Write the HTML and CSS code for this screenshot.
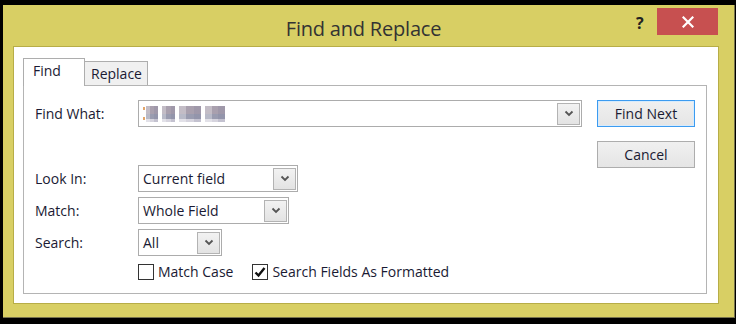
FILE: index.html
```html
<!DOCTYPE html>
<html lang="en">
<head>
<meta charset="utf-8">
<title>Find and Replace</title>
<link rel="stylesheet" href="styles.css">
</head>
<body>
<div class="window">
  <div class="titlebar">
    <div class="title">Find and Replace</div>
    <div class="help">?</div>
    <div class="close">
      <svg width="12" height="12" viewBox="0 0 12 12"><path d="M1.5 1.5 L10.5 10.5 M10.5 1.5 L1.5 10.5" stroke="#fff" stroke-width="2.2" stroke-linecap="square"/></svg>
    </div>
  </div>
  <div class="client">
    <div class="tabs">
      <div class="tab tab-active">Find</div>
      <div class="tab tab-inactive">Replace</div>
    </div>
    <div class="pane">
      <div class="fields">
        <div class="row">
          <div class="label">Find What:</div>
          <div class="combo combo-find">
            <div class="mosaic" aria-hidden="true">
              <span class="caret"></span>
              <span class="blk b1"></span>
              <span class="blk b2"></span>
              <span class="blk b3"></span>
              <span class="blk b4"></span>
            </div>
            <div class="drop"><svg width="10" height="7" viewBox="0 0 10 7"><path d="M1.5 1.5 L5 5 L8.5 1.5" fill="none" stroke="#555" stroke-width="1.8"/></svg></div>
          </div>
        </div>
        <div class="row row-lookin">
          <div class="label">Look In:</div>
          <div class="combo combo-lookin">
            <div class="value">Current field</div>
            <div class="drop"><svg width="10" height="7" viewBox="0 0 10 7"><path d="M1.5 1.5 L5 5 L8.5 1.5" fill="none" stroke="#555" stroke-width="1.8"/></svg></div>
          </div>
        </div>
        <div class="row row-tight">
          <div class="label">Match:</div>
          <div class="combo combo-match">
            <div class="value">Whole Field</div>
            <div class="drop"><svg width="10" height="7" viewBox="0 0 10 7"><path d="M1.5 1.5 L5 5 L8.5 1.5" fill="none" stroke="#555" stroke-width="1.8"/></svg></div>
          </div>
        </div>
        <div class="row row-tight">
          <div class="label">Search:</div>
          <div class="combo combo-search">
            <div class="value">All</div>
            <div class="drop"><svg width="10" height="7" viewBox="0 0 10 7"><path d="M1.5 1.5 L5 5 L8.5 1.5" fill="none" stroke="#555" stroke-width="1.8"/></svg></div>
          </div>
        </div>
        <div class="checks">
          <label class="check"><span class="box"></span><span>Match Case</span></label>
          <label class="check"><span class="box"><svg width="14" height="14" viewBox="0 0 14 14"><path d="M2.5 7.5 L5.5 10.5 L11.5 3" fill="none" stroke="#111" stroke-width="2.4"/></svg></span><span>Search Fields As Formatted</span></label>
        </div>
      </div>
      <div class="actions">
        <div class="btn btn-default">Find Next</div>
        <div class="btn btn-cancel">Cancel</div>
      </div>
    </div>
  </div>
</div>
</body>
</html>
```
FILE: styles.css
```css
html, body {
  margin: 0;
  padding: 0;
  background: #000;
}
body {
  width: 736px;
  height: 324px;
  overflow: hidden;
  font-family: "Open Sans", "Noto Sans", sans-serif;
  font-size: 14px;
  color: #1a1a33;
}
.window {
  margin: 5px 1px 0 3px;
  width: 731px;
  height: 312px;
  background: #d8cf64;
  border-right: 1px solid #77734e;
  border-bottom: 1px solid #77734e;
  display: flex;
  flex-direction: column;
}
.titlebar {
  height: 41px;
  display: flex;
  align-items: flex-start;
  position: relative;
}
.title {
  position: absolute;
  left: 0;
  right: 10px;
  top: 10px;
  text-align: center;
  font-size: 20px;
  color: #333;
  letter-spacing: -0.2px;
}
.help {
  position: absolute;
  left: 633px;
  top: 7px;
  font-weight: bold;
  font-size: 16px;
  color: #222;
}
.close {
  position: absolute;
  left: 654px;
  top: 3px;
  width: 61px;
  height: 27px;
  background: #c75050;
  display: flex;
  align-items: center;
  justify-content: center;
}
.client {
  margin: 0 15px 0 10px;
  height: 245px;
  background: #fff;
  border: 1px solid #b7ad47;
  padding: 11px 10px 0 9px;
  box-sizing: content-box;
  display: flex;
  flex-direction: column;
}
.tabs {
  display: flex;
  align-items: flex-end;
  height: 28px;
  position: relative;
  z-index: 1;
}
.tab {
  box-sizing: border-box;
  border: 1px solid #adadad;
  border-bottom: none;
  padding-left: 9px;
  line-height: 24px;
}
.tab-active {
  width: 62px;
  height: 28px;
  background: #fff;
}
.tab-inactive {
  width: 63px;
  height: 24px;
  margin-bottom: 1px;
  border-left: none;
  background: #f0f0f0;
  padding-left: 6px;
  line-height: 23px;
}
.pane {
  margin-top: -1px;
  width: 684px;
  height: 209px;
  box-sizing: border-box;
  border: 1px solid #b4b4b4;
  padding: 14px 11px 0 11px;
  display: flex;
}
.fields {
  width: 547px;
  display: flex;
  flex-direction: column;
}
.row {
  display: flex;
  align-items: center;
  height: 27px;
}
.row-lookin {
  margin-top: 38px;
}
.row-tight {
  margin-top: 5px;
}
.label {
  width: 103px;
}
.combo {
  box-sizing: border-box;
  height: 27px;
  border: 1px solid #acacac;
  display: flex;
  align-items: center;
  background: #fff;
}
.combo-find { width: 444px; }
.combo-lookin { width: 160px; }
.combo-match { width: 151px; }
.combo-search { width: 84px; }
.value {
  flex: 1;
  padding-left: 4px;
  white-space: nowrap;
}
.mosaic {
  flex: 1;
  display: flex;
  align-items: center;
  padding-left: 4px;
  height: 16px;
}
.caret {
  width: 2px;
  height: 14px;
  background: linear-gradient(#e2a56a 0 20%, transparent 20% 70%, #e2a56a 70% 90%, transparent 90%);
  margin-right: 1px;
}
.blk {
  height: 16px;
  margin-right: 4px;
  background:
    linear-gradient(90deg, rgba(255,255,255,0.3) 0 33%, transparent 33% 66%, rgba(120,120,150,0.2) 66%),
    linear-gradient(#a9a0ae 0 50%, #9a9cb0 50% 80%, #d6d4de 80%);
}
.b1 { width: 12px; }
.b2 { width: 13px; }
.b3 { width: 22px; }
.b4 { width: 20px; }
.drop {
  box-sizing: border-box;
  width: 23px;
  height: 22px;
  margin-right: 1px;
  border: 1px solid #b3b3b3;
  background: linear-gradient(#f2f2f2, #e3e3e3);
  display: flex;
  align-items: center;
  justify-content: center;
}
.checks {
  display: flex;
  align-items: center;
  height: 17px;
  margin-top: 7px;
  padding-left: 103px;
}
.check {
  display: flex;
  align-items: center;
  margin-right: 19px;
}
.box {
  box-sizing: border-box;
  width: 16px;
  height: 16px;
  border: 1px solid #333;
  background: #fff;
  margin-right: 4px;
  display: flex;
  align-items: center;
  justify-content: center;
}
.actions {
  margin-left: 15px;
  width: 98px;
  display: flex;
  flex-direction: column;
}
.btn {
  box-sizing: border-box;
  height: 27px;
  display: flex;
  align-items: center;
  justify-content: center;
  background: linear-gradient(#f0f0f0, #e5e5e5);
  border: 1px solid #adadad;
}
.btn-default {
  border-color: #3c9bf0;
  box-shadow: inset 0 0 0 1px #d7ebfc;
}
.btn-cancel {
  margin-top: 14px;
}
```
